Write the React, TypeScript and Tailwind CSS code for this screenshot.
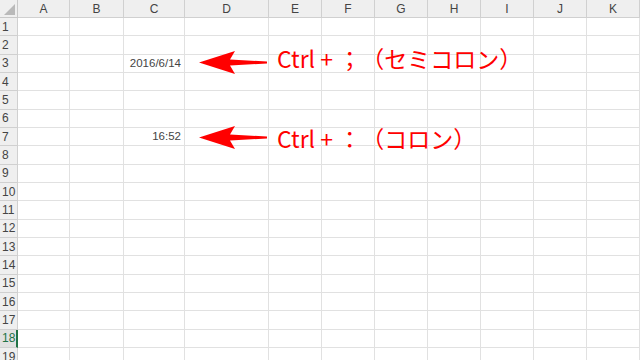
const COLS = ["A", "B", "C", "D", "E", "F", "G", "H", "I", "J", "K"];
const ROWS = Array.from({ length: 19 }, (_, i) => i + 1);

const cellText: Record<string, string> = {
  "3-C": "2016/6/14",
  "7-C": "16:52",
};

function Arrow({ className }: { className: string }) {
  return (
    <svg className={className} width="68" height="23" viewBox="0 0 68 23">
      <path d="M0 11.5 L36 0 L31 8.5 L68 10.5 L68 12.5 L31 14.5 L36 23 Z" fill="#ff0000" />
    </svg>
  );
}

// arrow + label drawn over the sheet, like an Excel shape
function Note({ className, arrowClass, textClass, label }: { className: string; arrowClass: string; textClass: string; label: string }) {
  return (
    <div className={"absolute left-[199px] flex items-start gap-[10px] " + className}>
      <Arrow className={arrowClass} />
      <div className={"text-[23px] leading-[23px] text-[#ff0000] whitespace-nowrap [text-spacing-trim:space-all] " + textClass}>
        {label}
      </div>
    </div>
  );
}

export default function App() {
  return (
    <div className="relative w-[640px] h-[360px] overflow-hidden bg-white font-['Noto_Sans_CJK_JP','Noto_Sans',sans-serif]">
      <div className="grid grid-cols-[18px_52px_54px_61px_84px_53px_53px_53px_53px_53px_53px_53px] grid-rows-[18px_repeat(19,18.33px)]">
        {/* corner */}
        <div className="relative bg-[#efefef] border-r border-b border-[#c8c8c8]">
          <div className="absolute right-[2px] bottom-[2px] w-0 h-0 border-l-[11px] border-l-transparent border-b-[11px] border-b-[#b9b9b9]"></div>
        </div>
        {COLS.map((c) => (
          <div
            key={c}
            className="flex items-center justify-center bg-[#efefef] border-r border-b border-[#d0d0d0] text-[12px] text-[#444] font-['Liberation_Sans',sans-serif]"
          >
            {c}
          </div>
        ))}
        {ROWS.map((r) => (
          <Row key={r} r={r} />
        ))}
      </div>

      <Note className="top-[47px]" arrowClass="mt-[4px]" textClass="" label="Ctrl + ；（セミコロン）" />
      <Note className="top-[126px]" arrowClass="" textClass="mt-[1px]" label="Ctrl + ：（コロン）" />
    </div>
  );
}

function Row({ r }: { r: number }) {
  const selected = r === 18;
  return (
    <>
      <div
        className={
          selected
            ? "flex items-center pl-[2px] bg-[#e1e1e1] border-r-2 border-r-[#217346] border-b border-b-[#d0d0d0] text-[12px] text-[#217346] font-['Liberation_Sans',sans-serif]"
            : "flex items-center pl-[2px] bg-[#efefef] border-r border-b border-[#d0d0d0] text-[12px] text-[#444] font-['Liberation_Sans',sans-serif]"
        }
      >
        {r}
      </div>
      {COLS.map((c) => (
        <div
          key={c}
          className="flex items-center justify-end pr-[3px] border-r border-b border-[#e1e1e1] text-[11.5px] text-[#444] font-['Liberation_Sans',sans-serif] whitespace-nowrap"
        >
          {cellText[`${r}-${c}`]}
        </div>
      ))}
    </>
  );
}
